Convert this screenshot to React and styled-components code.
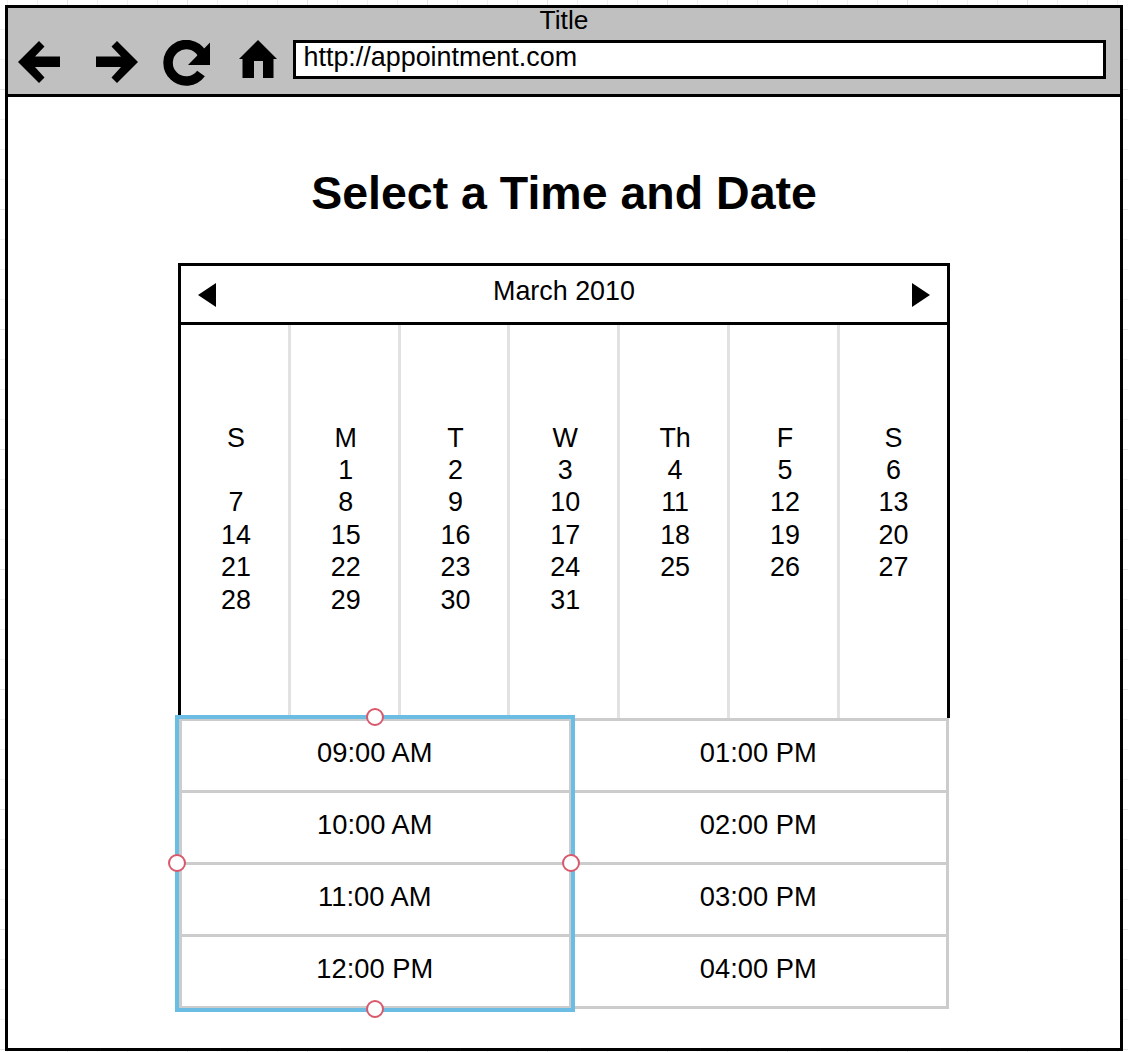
import React from 'react';
import styled, { createGlobalStyle } from 'styled-components';

const FONT = '"Liberation Sans", Arial, sans-serif';
const GRID_LINE = '#f0f0f0';
const GRID_LINE_BOLD = '#e4e4e4';
const CELL_LINE = '#cccccc';
const DAY_LINE = '#e2e2e2';
const SELECTION = '#6cbde3';
const HANDLE = '#d9596c';

const GlobalStyle = createGlobalStyle`
	html, body {
		margin: 0;
		padding: 0;
		background-color: #fff;
	}
	body {
		font-family: ${FONT};
		color: #000;
	}
`;

const Page = styled.div`
	box-sizing: border-box;
	width: 1128px;
	height: 1052px;
	padding: 5px 5px 1px 5px;
	overflow: hidden;
	background-color: #fff;
	background-image:
		linear-gradient(to right, ${GRID_LINE_BOLD} 1px, transparent 1px),
		linear-gradient(to bottom, ${GRID_LINE_BOLD} 1px, transparent 1px),
		linear-gradient(to right, ${GRID_LINE} 1px, transparent 1px),
		linear-gradient(to bottom, ${GRID_LINE} 1px, transparent 1px);
	background-size: 120px 120px, 120px 120px, 30px 30px, 30px 30px;
	background-position: 67px 89px, 67px 89px, 37px 29px, 37px 29px;
`;

const Frame = styled.div`
	box-sizing: border-box;
	width: 100%;
	height: 100%;
	border: 3px solid #000;
	background: #fff;
	display: flex;
	flex-direction: column;
`;

const Toolbar = styled.header`
	box-sizing: border-box;
	height: 89px;
	flex: none;
	background: #c0c0c0;
	border-bottom: 3px solid #000;
`;

const WindowTitle = styled.div`
	height: 32px;
	font-size: 26.4px;
	line-height: 25px;
	text-align: center;
`;

const NavRow = styled.div`
	display: flex;
	align-items: flex-start;
	padding-left: 10px;
`;

const NavIcon = styled.svg`
	display: block;
	flex: none;
	margin-right: ${props => props.$gap}px;
`;

const AddressBar = styled.div`
	box-sizing: border-box;
	width: 813px;
	height: 39px;
	flex: none;
	border: 3px solid #000;
	background: #fff;
	padding-left: 7.5px;
	font-size: 26.9px;
	line-height: 29px;
`;

const Main = styled.main`
	flex: 1;
	display: flex;
	flex-direction: column;
	align-items: flex-start;
	padding-left: 170px;
`;

const Heading = styled.h1`
	align-self: stretch;
	margin: 70px 170px 43px 0;
	font-size: 46.5px;
	line-height: 53px;
	font-weight: bold;
	text-align: center;
`;

const Calendar = styled.section`
	box-sizing: border-box;
	width: 772px;
	border: 3px solid #000;
	border-bottom: none;
`;

const CalendarHeader = styled.div`
	box-sizing: border-box;
	height: 59px;
	display: flex;
	align-items: center;
	justify-content: space-between;
	padding: 0 17px;
	border-bottom: 3px solid #000;
`;

const MonthLabel = styled.div`
	font-size: 26.9px;
	line-height: 32px;
	margin-bottom: 6px;
`;

const Arrow = styled.svg`
	display: block;
	width: 18px;
	height: 24px;
	margin-top: 1px;
`;

const DaysGrid = styled.div`
	height: 393px;
	display: grid;
	grid-template-columns: repeat(6, 109.8px) 1fr;
`;

const DayColumn = styled.div`
	box-sizing: border-box;
	display: flex;
	flex-direction: column;
	justify-content: center;
	align-items: center;
	padding-bottom: 5.4px;
	padding-left: ${props => (props.$last ? '0' : '3px')};
	font-size: 26.9px;
	line-height: 32.4px;
	border-right: ${props => (props.$last ? 'none' : `3px solid ${DAY_LINE}`)};
`;

const DayCell = styled.div`
	height: 32.4px;
`;

const TimeArea = styled.div`
	position: relative;
	width: 771px;
`;

const TimeGrid = styled.div`
	display: grid;
	grid-template-columns: 389.5px 1fr;
	grid-auto-flow: column;
	grid-template-rows: repeat(4, 72px);
	box-sizing: border-box;
	width: 770px;
	margin-left: 1px;
	border-top: 3px solid ${CELL_LINE};
	border-left: 3px solid ${CELL_LINE};
`;

const TimeSlot = styled.div`
	box-sizing: border-box;
	display: flex;
	align-items: center;
	justify-content: center;
	padding: 0 1px 5px 0;
	font-size: 27.3px;
	border-right: 3px solid ${CELL_LINE};
	border-bottom: 3px solid ${CELL_LINE};
`;

const Selection = styled.div`
	position: absolute;
	box-sizing: border-box;
	left: -3px;
	top: -3px;
	width: 400px;
	height: 297px;
	border: 4px solid ${SELECTION};
	pointer-events: none;
`;

const Handle = styled.span`
	position: absolute;
	box-sizing: border-box;
	width: 18px;
	height: 18px;
	border-radius: 50%;
	background: #fff;
	border: 2px solid ${HANDLE};
	left: ${props => props.$x}px;
	top: ${props => props.$y}px;
`;

const DAY_COLUMNS = [
	['S', '', '7', '14', '21', '28'],
	['M', '1', '8', '15', '22', '29'],
	['T', '2', '9', '16', '23', '30'],
	['W', '3', '10', '17', '24', '31'],
	['Th', '4', '11', '18', '25', ''],
	['F', '5', '12', '19', '26', ''],
	['S', '6', '13', '20', '27', ''],
];

const TIMES = [
	'09:00 AM', '10:00 AM', '11:00 AM', '12:00 PM',
	'01:00 PM', '02:00 PM', '03:00 PM', '04:00 PM',
];

export default function App() {
	return (
		<>
			<GlobalStyle />
			<Page>
				<Frame>
					<Toolbar>
						<WindowTitle>Title</WindowTitle>
						<NavRow>
							<NavIcon $gap={36} width="42" height="44" viewBox="18 38 42 44">
								<path d="M18 60 L39 39 L44.5 44.5 L35 54.5 H60 V65 H35 L44.5 75.5 L39 81 Z" />
							</NavIcon>
							<NavIcon $gap={25} width="42" height="44" viewBox="96 38 42 44">
								<path d="M138 60 L117 39 L111.5 44.5 L121 54.5 H96 V65 H121 L111.5 75.5 L117 81 Z" />
							</NavIcon>
							<NavIcon $gap={29} width="47" height="46" viewBox="163 37 47 46">
								<path d="M202 50.6 A18.2 18.2 0 1 0 201 70.5" fill="none" stroke="#000" strokeWidth="9.5" />
								<path d="M210 39.5 V62 H188 Z" />
							</NavIcon>
							<NavIcon $gap={16} width="38" height="39" viewBox="239 41 38 39">
								<path d="M258 41 L277 60 H273.5 V79 H263 V62 H254 V79 H242.5 V60 H239 Z" />
							</NavIcon>
							<AddressBar>http://appointment.com</AddressBar>
						</NavRow>
					</Toolbar>
					<Main>
						<Heading>Select a Time and Date</Heading>
						<Calendar>
							<CalendarHeader>
								<Arrow viewBox="0 0 18 24"><path d="M18 0 V24 L0 12 Z" /></Arrow>
								<MonthLabel>March 2010</MonthLabel>
								<Arrow viewBox="0 0 18 24"><path d="M0 0 V24 L18 12 Z" /></Arrow>
							</CalendarHeader>
							<DaysGrid>
								{DAY_COLUMNS.map((days, i) => (
									<DayColumn key={i} $last={i === DAY_COLUMNS.length - 1}>
										{days.map((day, j) => <DayCell key={j}>{day}</DayCell>)}
									</DayColumn>
								))}
							</DaysGrid>
						</Calendar>
						<TimeArea>
							<TimeGrid>
								{TIMES.map(time => <TimeSlot key={time}>{time}</TimeSlot>)}
							</TimeGrid>
							<Selection>
								<Handle $x={187} $y={-11} />
								<Handle $x={-11} $y={135} />
								<Handle $x={383} $y={135} />
								<Handle $x={187} $y={281} />
							</Selection>
						</TimeArea>
					</Main>
				</Frame>
			</Page>
		</>
	);
}
